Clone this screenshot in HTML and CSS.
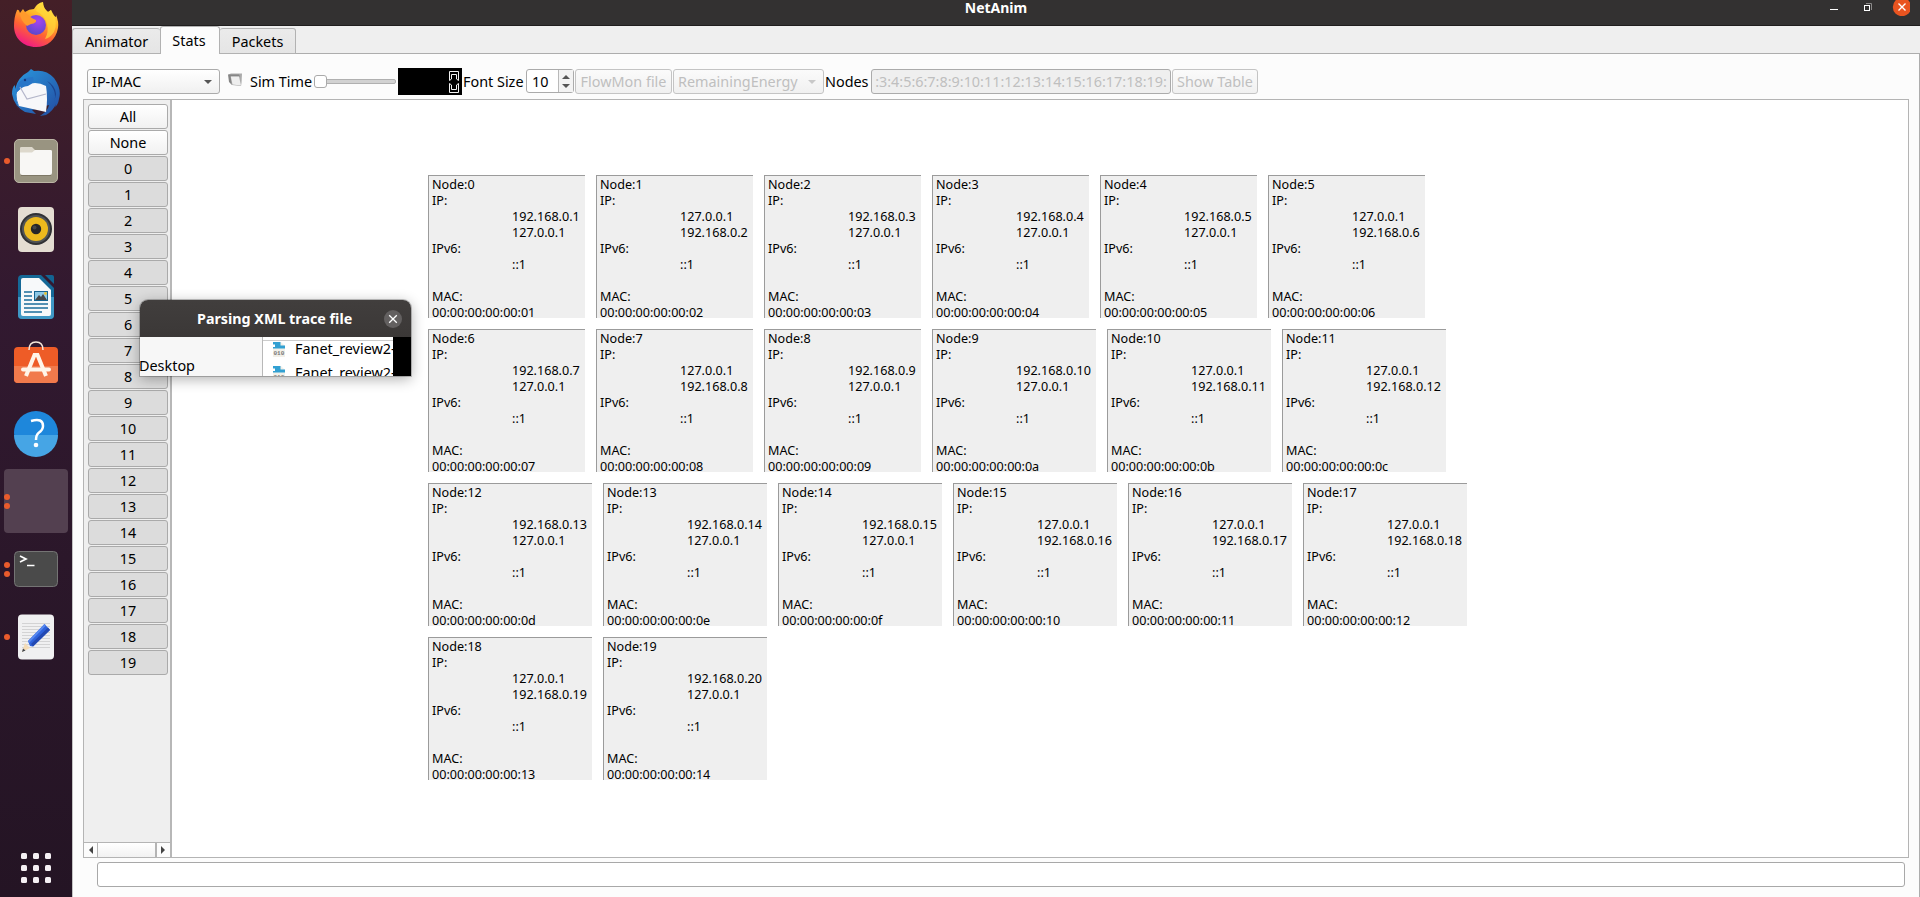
FILE: index.html
```html
<!DOCTYPE html>
<html lang="en">
<head>
<meta charset="utf-8">
<title>NetAnim</title>
<link rel="stylesheet" href="styles.css">
</head>
<body>
<div class="desktop">
  <nav class="dock">
    <div class="dock-item">
      <svg width="48" height="48" viewBox="0 0 48 48">
        <defs>
          <linearGradient id="fx" x1=".8" y1="0" x2=".3" y2="1"><stop offset="0" stop-color="#fff04a"/><stop offset=".35" stop-color="#ffb52a"/><stop offset=".65" stop-color="#ff6432"/><stop offset="1" stop-color="#f0168a"/></linearGradient>
          <radialGradient id="fc" cx=".6" cy=".3" r=".8"><stop offset="0" stop-color="#a644f0"/><stop offset="1" stop-color="#5248c8"/></radialGradient>
        </defs>
        <path d="M5 9Q7 8 8 12L11 8L13 11Q17 8 22 8Q25 2 31 1Q31 7 36 11L39 9Q41 15 44 16L44 14Q47 21 46 27C44 39 35 46 24 46C11 46 2 37 2 25Q2 16 5 9Z" fill="url(#fx)"/>
        <path d="M31 1Q31 7 36 11L39 9Q47 20 42 31Q38 37 33 38Q37 31 35 23Q33 14 24 10Q26 4 31 1Z" fill="#ffd83a" opacity=".7"/>
        <circle cx="24" cy="24" r="10" fill="url(#fc)"/>
        <path d="M8 12L13 11Q17 16 24 19Q25 22 19 23L15 25Q8 19 8 12Z" fill="#ff9a2c"/>
      </svg>
    </div>
    <div class="dock-item">
      <svg width="48" height="48" viewBox="0 0 48 48">
        <defs><linearGradient id="tb" x1="0" y1="0" x2="1" y2="1"><stop offset="0" stop-color="#2a9ae0"/><stop offset="1" stop-color="#234ba0"/></linearGradient></defs>
        <path d="M16 3L19 0L22 2Q34 0 42 9Q50 20 47 30Q46 36 43 38L44 35Q41 42 34 46L28 47Q36 42 37 36L20 41L24 45L13 43Q2 37 0 25Q0 18 3 16L3 20Q6 8 16 3Z" fill="url(#tb)"/>
        <path d="M5 23L12 17Q23 11 34 17Q36 29 34 43L7 37Q3 31 5 23Z" fill="#f7f7fa"/>
        <path d="M5 23Q10 17 16 17Q24 13 21 8Q12 8 6 14Q2 25 7 37Q2 30 5 23Z" fill="#2876c8"/>
        <path d="M8 18L15 30L34 25" fill="none" stroke="#b4b6ca" stroke-width="1.2"/>
        <path d="M35 12Q46 22 42 34L44 25Q43 16 35 12ZM3 33Q6 43 16 46Q7 43 4 35Z" fill="#1c438f"/>
        <circle cx="13" cy="11" r="1.2" fill="#173a7e"/>
      </svg>
    </div>
    <div class="dock-item">
      <span class="dots"><i></i></span>
      <svg width="48" height="48" viewBox="0 0 48 48">
        <rect x="2.5" y="2.5" width="43" height="43" rx="4.5" fill="#999481" stroke="#bcb6a5"/>
        <path d="M8 11Q8 10 9.500 10H20L23 13H38.500Q40 13 40 15V20H8Z" fill="#ddd8cc"/>
        <path d="M8 15.500H20L23 13H38.500Q40 13 40 14.500V35.500Q40 38 37.500 38H10.500Q8 38 8 35.500Z" fill="#f8f7f5"/>
        <path d="M9 38.500H39" stroke="#7e7866"/>
      </svg>
    </div>
    <div class="dock-item">
      <svg width="48" height="48" viewBox="0 0 48 48">
        <rect x="6" y="2" width="36" height="45" rx="4" fill="#e4ddd2"/>
        <circle cx="24" cy="24" r="16" fill="#303134"/><circle cx="24" cy="24" r="14" fill="#515456"/>
        <circle cx="24" cy="24" r="12" fill="#ecb91d"/><circle cx="24" cy="24" r="5.200" fill="#252629"/>
        <circle cx="22.500" cy="22.500" r="2" fill="#444648"/>
      </svg>
    </div>
    <div class="dock-item">
      <svg width="48" height="48" viewBox="0 0 48 48">
        <path d="M10 2H29L42 15V42Q42 46 38 46H10Q6 46 6 42V6Q6 2 10 2Z" fill="#156997"/>
        <path d="M6 24H42V42Q42 46 38 46H10Q6 46 6 42Z" fill="#3f98c5"/>
        <path d="M33 2H40Q42 2 42 4V11Z" fill="#126492"/>
        <path d="M11 5H27L39 17V41Q39 43 37 43H11Q9 43 9 41V7Q9 5 11 5Z" fill="#f7f9fa"/>
        <path d="M12 19H20M12 23H20M12 27H20M12 31H36M12 35H36M12 39H30" stroke="#1d6e9c" stroke-width="1.600"/>
        <rect x="22.500" y="18.500" width="13" height="9" fill="#8ec9e6" stroke="#176591"/>
        <path d="M23 27L27 22L29 24L31 21L35 27Z" fill="#464849"/><circle cx="33.500" cy="20.500" r="1.400" fill="#e6c334"/>
      </svg>
    </div>
    <div class="dock-item">
      <svg width="48" height="48" viewBox="0 0 48 48">
        <rect x="2" y="6" width="44" height="36" rx="4" fill="#ee5c27"/>
        <path d="M2 25H46V38Q46 42 42 42H6Q2 42 2 38Z" fill="#f17a4c"/>
        <path d="M17 9Q17 1 24 1Q31 1 31 9" fill="none" stroke="#f6e7da" stroke-width="1.500"/>
        <path d="M14 35L22.500 14H25.500L34 35" fill="none" stroke="#fff5e9" stroke-width="4"/>
        <path d="M11 28.500H37" stroke="#fff5e9" stroke-width="4" stroke-linecap="round"/>
      </svg>
    </div>
    <div class="dock-item">
      <svg width="48" height="48" viewBox="0 0 48 48">
        <circle cx="24" cy="24" r="22" fill="#1e87db"/><path d="M2 26H46A22 22 0 0 1 2 26Z" fill="#46a5e5"/>
        <path d="M19 12Q31 8.500 31 17Q31 21 26.500 24Q24 26 24 31" fill="none" stroke="#fff" stroke-width="2.500"/><circle cx="24" cy="36" r="2.300" fill="#fff"/>
      </svg>
    </div>
    <div class="dock-item active"><span class="dots"><i></i><i></i></span></div>
    <div class="dock-item">
      <span class="dots"><i></i><i></i></span>
      <svg width="48" height="48" viewBox="0 0 48 48">
        <rect x="2.500" y="6.500" width="43" height="35" rx="4" fill="#4a4a4a" stroke="#747474"/>
        <path d="M8 11L14 14L8 17" fill="none" stroke="#fff" stroke-width="1.700"/><path d="M15 20.500H22.500" stroke="#fff" stroke-width="1.500"/>
      </svg>
    </div>
    <div class="dock-item">
      <span class="dots"><i></i></span>
      <svg width="48" height="48" viewBox="0 0 48 48">
        <rect x="6" y="1.500" width="36" height="45" rx="4" fill="#f0f0f1"/>
        <path d="M10 10.500H38M10 13.500H38M10 16.500H38M10 19.500H38M10 22.500H38M10 25.500H38M10 28.500H38M10 31.500H38M10 34.500H38" stroke="#cbcccd" stroke-width=".8"/>
        <path d="M10 39L13 30L18 35Z" fill="#f4dcb6"/><path d="M10 39L11 35.500L13.500 37.500Z" fill="#42464d"/>
        <path d="M16 28L32.500 11L38 17L21 33.500L18 33Z" fill="#2e62dc"/><path d="M21 33.500L38 17L36 14.500L19 31Z" fill="#2248b2"/><path d="M16 28L32.500 11L34 12.500L17 30Z" fill="#5788ef"/>
      </svg>
    </div>
    <div class="app-grid"><i></i><i></i><i></i><i></i><i></i><i></i><i></i><i></i><i></i></div>
  </nav>

  <main class="window">
    <header class="titlebar">
      <h1 class="title">NetAnim</h1>
      <svg class="controls" width="90" height="18" viewBox="0 0 90 18">
        <path d="M10 11.500H18" stroke="#fff"/>
        <path d="M46 5.500H51.500V12" fill="none" stroke="#8b8989"/><rect x="44.500" y="7.500" width="5" height="5" fill="none" stroke="#fff"/>
        <circle cx="82" cy="9" r="9.200" fill="#e95420"/><path d="M78.500 5.500L85.500 12.500M85.500 5.500L78.500 12.500" stroke="#fff" stroke-width="1.400"/>
      </svg>
    </header>
    <div class="tabs">
      <div class="tab tab-first">Animator</div>
      <div class="tab tab-current">Stats</div>
      <div class="tab tab-last">Packets</div>
    </div>
    <section class="page">
      <div class="toolbar">
        <div class="control combo mode"><span>IP-MAC</span><b class="down"></b></div>
        <svg class="cube" width="15" height="14" viewBox="0 0 15 14"><path d="M.5 1.500L3 .5H14L13.500 10L13 13L4 12Z" fill="#ababab"/><path d="M0 1.500L11 1.500L12 3.500H2.500L4 12L1 9Z" fill="#858585"/><path d="M2.800 3.500L11 3.500L13 12.500L4.500 11.500Z" fill="#eee"/></svg>
        <span class="sim">Sim Time</span>
        <div class="slider"><i></i></div>
        <div class="lcd"><svg width="12" height="24" viewBox="0 0 12 24"><path d="M1.500 10.500V1.500H10.500V10.500L8.500 9V4.500H3.500V9ZM1.500 13.500V22.500H10.500V13.500L8.500 15V19.500H3.500V15Z" fill="#000" stroke="#f2f2f2"/></svg></div>
        <span class="font-label">Font Size</span>
        <div class="spin"><span>10</span><div class="steps"><b class="up"></b><b class="down"></b></div></div>
        <div class="control off flow">FlowMon file</div>
        <div class="control combo off energy"><span>RemainingEnergy</span><b class="down"></b></div>
        <span class="nodes-label">Nodes</span>
        <div class="control off node-list">:3:4:5:6:7:8:9:10:11:12:13:14:15:16:17:18:19:</div>
        <div class="control off table">Show Table</div>
      </div>
      <div class="view">
        <aside class="side">
          <div class="buttons" id="buttons"></div>
          <div class="hscroll"><span><b class="left"></b></span><i></i><span><b class="right"></b></span></div>
        </aside>
        <div class="canvas" id="canvas"></div>
      </div>
      <div class="status"></div>
    </section>
  </main>

  <section class="dialog">
    <header class="dialog-title"><h2>Parsing XML trace file</h2>
      <svg width="18" height="18" viewBox="0 0 18 18"><circle cx="9" cy="9" r="9" fill="#636060"/><path d="M5.200 5.200L12.800 12.800M12.800 5.200L5.200 12.800" stroke="#fff" stroke-width="1.300"/></svg>
    </header>
    <div class="dialog-body">
      <div class="places">Desktop</div>
      <div class="files">
        <div class="file"><svg width="13" height="16" viewBox="0 0 13 16"><path d="M0 1H8L12 5V16H0Z" fill="#f2f0e9"/><path d="M0 1H7.500V4.500H12V7.500H0Z" fill="#32a0d2"/><path d="M0 3.500H2V6H0Z" fill="#fff"/><text x=".5" y="13.500" class="bits">010</text></svg><span>Fanet_review2-</span></div>
        <div class="file"><svg width="13" height="16" viewBox="0 0 13 16"><path d="M0 1H8L12 5V16H0Z" fill="#f2f0e9"/><path d="M0 1H7.500V4.500H12V7.500H0Z" fill="#32a0d2"/><path d="M0 3.500H2V6H0Z" fill="#fff"/><text x=".5" y="13.500" class="bits">010</text></svg><span>Fanet_review2-</span></div>
      </div>
      <div class="void"></div>
    </div>
  </section>
</div>
<script src="app.js"></script>
</body>
</html>
```
FILE: styles.css
```css
* { box-sizing: border-box; }
body { margin: 0; font: 14.4px/20px "Noto Sans", "Open Sans", sans-serif; color: #000; overflow: hidden; }
h1, h2 { margin: 0; font-size: 14px; line-height: 18px; }
i, b { display: block; }
.desktop { position: relative; display: flex; width: 1920px; height: 897px; overflow: hidden; }

.dock { width: 72px; height: 897px; flex: none; display: flex; flex-direction: column; align-items: center; gap: 4px; background: linear-gradient(#441f27 0, #3a1c2c 150px, #321930 300px, #2b172a 560px, #241424 897px); overflow: hidden; }
.dock-item { position: relative; width: 64px; height: 64px; flex: none; display: flex; align-items: center; justify-content: center; border-radius: 4px; }
.dock-item:first-child { margin-top: -7px; }
.dock-item.active { background: #534050; }
.dots { position: absolute; left: 0; top: 0; height: 64px; display: flex; flex-direction: column; justify-content: center; gap: 3px; }
.dots i { width: 6px; height: 6px; border-radius: 50%; background: #e95b2c; }
.app-grid { display: grid; grid-template-columns: repeat(3, 6px); gap: 6px; margin-top: auto; margin-bottom: 14px; }
.app-grid i { width: 6px; height: 6px; border-radius: 1.5px; background: #f5f0f4; }

.window { flex: 1; min-width: 0; display: flex; flex-direction: column; background: #efefef; }
.titlebar { height: 26px; flex: none; display: grid; grid-template-columns: 1fr auto 1fr; background: #333131; border-bottom: 1px solid #201e1e; color: #fff; }
.title { grid-column: 2; height: 18px; margin-top: -1px; }
.controls { justify-self: end; margin-top: -2px; margin-right: 10px; }
.tabs { height: 28px; flex: none; display: flex; align-items: flex-end; box-shadow: inset 0 -1px #adadad; }
.tab { height: 26px; border: 1px solid #b2b2b2; border-radius: 3px 3px 0 0; background: linear-gradient(#ebebeb, #e5e5e5); text-align: center; line-height: 26px; }
.tab-first { width: 88px; border-right: 0; }
.tab-current { width: 60px; height: 28px; background: #fcfcfc; border-bottom: 0; line-height: 27px; padding-right: 2px; }
.tab-last { width: 76px; border-left: 0; }
.page { flex: 1; background: #fcfcfc; border-left: 1px solid #c3c3c3; border-right: 1px solid #adadad; padding: 14px 10px 10px; display: flex; flex-direction: column; }

.toolbar { height: 27px; margin-bottom: 4px; padding-left: 4px; display: flex; align-items: center; white-space: nowrap; }
.control { height: 25px; border: 1px solid #ababab; border-radius: 3px; background: linear-gradient(#fff, #f0f0f0); line-height: 23px; text-align: center; flex: none; }
.control.off { color: #bfbfbf; border-color: #c4c4c4; background: linear-gradient(#fbfbfb, #f0f0f0); }
.combo { display: flex; justify-content: space-between; align-items: center; padding: 0 7px 0 4px; }
.mode { width: 133px; }
.down { width: 0; height: 0; border: 4px solid transparent; border-bottom: 0; border-top-color: #555; }
.up { width: 0; height: 0; border: 4px solid transparent; border-top: 0; border-bottom-color: #555; }
.off .down { border-top-color: #c8c8c8; }
.cube { margin-left: 8px; margin-top: -4px; }
.sim { width: 64px; margin-left: 7px; }
.slider { width: 82px; height: 5px; flex: none; border: 1px solid #b0b0b0; border-radius: 2px; background: #d2d2d2; display: flex; align-items: center; }
.slider i { width: 13px; height: 13px; flex: none; margin-left: -1px; border: 1px solid #aaa; border-radius: 3px; background: #fff; }
.lcd { width: 64px; height: 27px; margin-left: 2px; flex: none; background: #000; display: flex; align-items: center; justify-content: flex-end; padding-right: 2px; }
.font-label { width: 64px; padding-left: 1px; }
.spin { width: 48px; height: 24px; margin-top: -1px; flex: none; border: 1px solid #ababab; border-radius: 3px; background: #fff; display: flex; justify-content: space-between; padding-left: 5px; line-height: 24px; }
.steps { width: 15px; background: #f3f3f3; border-left: 1px solid #b9b9b9; display: flex; flex-direction: column; align-items: center; justify-content: center; gap: 5px; }
.flow { width: 97px; margin-left: 1px; }
.energy { width: 151px; margin-left: 1px; }
.nodes-label { width: 47px; padding-left: 1px; }
.control.node-list { width: 300px; background: #efefef; border-color: #ababab; overflow: hidden; }
.table { width: 86px; margin-left: 1px; }

.view { height: 759px; border: 1px solid #b4b4b4; background: #fff; display: flex; }
.side { width: 88px; flex: none; border-right: 2px solid #b7b7b7; background: #efefef; display: flex; flex-direction: column; justify-content: space-between; }
.buttons { padding: 4px 0 0 4px; display: flex; flex-direction: column; gap: 1px; }
.button { width: 80px; height: 25px; border: 1px solid #aaa; border-radius: 3px; background: #dcdcdc; text-align: center; line-height: 23px; }
.button.plain { background: linear-gradient(#fff, #f1f1f1); }
.hscroll { height: 15px; border-top: 1px solid #b4b4b4; background: #e0e0e0; display: flex; justify-content: space-between; }
.hscroll span { width: 13px; background: #fcfcfc; display: flex; align-items: center; justify-content: center; }
.hscroll i { width: 59px; border: solid #b4b4b4; border-width: 0 1px; background: linear-gradient(#fff, #f2f2f2); }
.hscroll span:last-child { border-left: 1px solid #b4b4b4; width: 14px; padding-right: 2px; }
.left, .right { border: 4px solid transparent; }
.left { border-left: 0; border-right-color: #444; }
.right { border-right: 0; border-left-color: #444; }

.canvas { padding: 75px 0 0 256px; display: flex; flex-direction: column; gap: 11px; font-size: 12.6px; line-height: 16px; }
.node-row { display: flex; gap: 11px; }
.node { width: 157px; height: 143px; overflow: hidden; border: solid #9b9b9b; border-width: 1px 0 0 1px; background: #efefef; padding: 1px 0 0 3px; white-space: nowrap; }
.node.wide { width: 164px; }
.node div { height: 16px; }
.node .addr { padding-left: 80px; }
.node .mac { height: 13px; }
.status { height: 25px; margin: 4px 4px 0 14px; border: 1px solid #a8a8a8; border-radius: 3px; background: #fff; }

.dialog { position: absolute; left: 140px; top: 300px; width: 271px; height: 76px; border-radius: 8px 8px 0 0; box-shadow: 0 0 0 1px rgba(0,0,0,.22), 0 3px 14px rgba(0,0,0,.32); background: #fff; }
.dialog-title { height: 37px; display: flex; align-items: center; justify-content: space-between; padding: 0 9px 0 57px; background: linear-gradient(#413e3d, #3b3837); border-radius: 8px 8px 0 0; color: #fff; }
.dialog-title h2 { font-size: 14.3px; white-space: nowrap; }
.dialog-body { height: 39px; display: flex; overflow: hidden; }
.places { width: 122px; background: #f7f7f7; padding-top: 19px; text-indent: -1px; }
.files { width: 131px; border-left: 1px solid #b8b8b8; overflow: hidden; background: linear-gradient(#fff 3px, #ccc 3px, #ccc 4px, #fff 4px); padding: 0 0 0 10px; }
.file { height: 24px; display: flex; align-items: center; gap: 9px; white-space: nowrap; }
.file svg { flex: none; }
.bits { font: bold 6px "Liberation Mono", monospace; fill: #777; }
.void { width: 18px; background: #000; }
```
FILE: app.js
```js
const buttons = document.getElementById('buttons');
['All', 'None', ...Array(20).keys()].forEach((label, i) => {
  const el = document.createElement('div');
  el.className = i < 2 ? 'button plain' : 'button';
  el.textContent = label;
  buttons.append(el);
});

// Nodes whose loopback address is listed before the network address.
const loopbackFirst = new Set([1, 5, 7, 10, 11, 15, 16, 17, 18]);
const canvas = document.getElementById('canvas');
let row;
for (let n = 0; n < 20; n++) {
  if (n % 6 === 0) {
    row = document.createElement('div');
    row.className = 'node-row';
    canvas.append(row);
  }
  const addrs = [`192.168.0.${n + 1}`, '127.0.0.1'];
  if (loopbackFirst.has(n)) addrs.reverse();
  const mac = '00:00:00:00:00:' + (n + 1).toString(16).padStart(2, '0');
  const node = document.createElement('div');
  node.className = n >= 9 ? 'node wide' : 'node';
  node.innerHTML = `<div>Node:${n}</div><div>IP:</div>` +
    addrs.map(a => `<div class="addr">${a}</div>`).join('') +
    `<div>IPv6:</div><div class="addr">::1</div><div></div><div>MAC:</div><div class="mac">${mac}</div>`;
  row.append(node);
}
```
